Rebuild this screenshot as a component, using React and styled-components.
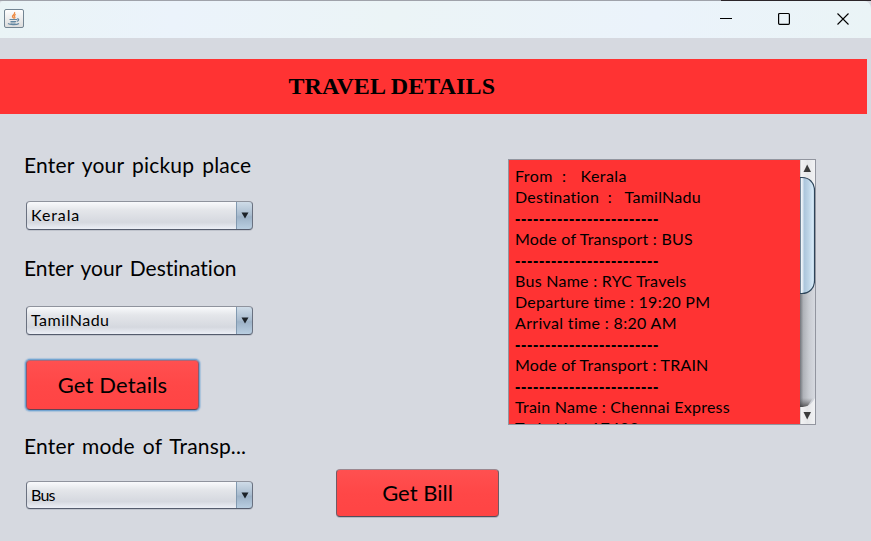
import React from "react";
import styled, { createGlobalStyle } from "styled-components";

const GlobalStyle = createGlobalStyle`
  * { box-sizing: border-box; }
  body { margin: 0; overflow: hidden; background: #d6d9e0; }
`;

const Window = styled.main`
  width: 871px;
  height: 541px;
  overflow: hidden;
  background: #d6d9e0;
  color: #000;
  font-family: Lato, "Liberation Sans", sans-serif;
  font-variant-ligatures: none;
  border-bottom-left-radius: 3px;
`;

const TopEdge = styled.div`
  height: 1px;
  background: linear-gradient(90deg, #9fa2aa 721px, #2b2529 721px);
`;

const TitleBar = styled.header`
  display: flex;
  align-items: flex-start;
  justify-content: space-between;
  height: 37px;
  padding: 8px 0 0 4px;
  background: linear-gradient(100deg, #eaf4f6, #ebf3fb 20%, #ebf4f6 45%, #ebf3fb 75%, #eaf4f6);
  border-radius: 3px 7px 0 0;
`;

const WindowControls = styled.div`
  display: flex;
  gap: 46px;
  margin: 3px 21px 0 0;
`;

const Content = styled.div`
  padding-top: 21px;
`;

const Banner = styled.h1`
  width: 867px;
  height: 55px;
  margin: 0;
  padding-left: 288.5px;
  background: #ff3333;
  font: bold 24px/55px "Liberation Serif", serif;
  letter-spacing: 0.1px;
`;

const Columns = styled.div`
  display: grid;
  grid-template-columns: 336px 172px 308px;
`;

const FormColumn = styled.section`
  display: flex;
  flex-direction: column;
  align-items: flex-start;
  padding: 36px 0 0 24px;
`;

const Label = styled.label`
  height: 30px;
  margin-top: ${(p) => p.$above || 0}px;
  font-size: 21px;
  line-height: 30px;
  letter-spacing: ${(p) => p.$track || 0}px;
  word-spacing: 2.5px;
  white-space: pre;
`;

const Combo = styled.div`
  display: flex;
  justify-content: space-between;
  width: 227px;
  height: ${(p) => p.$height || 29}px;
  margin: ${(p) => p.$above}px 0 0 2px;
  border: 1px solid;
  border-color: #8f939d #6a7180 #555c6d #6a7180;
  border-radius: 4px;
  background: linear-gradient(#f9fafc, #e4e6ea 30%, #d5d8df 75%, #eceff6);
  box-shadow: 0 1px 0 #bfc3cc;
  overflow: hidden;
`;

const ComboValue = styled.span`
  padding-left: 4px;
  font-size: 16px;
  line-height: 25px;
  letter-spacing: ${(p) => p.$track || 0}px;
`;

const ComboArrow = styled.span`
  display: flex;
  align-items: center;
  justify-content: center;
  width: 17px;
  margin: -1px -1px -1px 0;
  border: 1px solid;
  border-color: #5f7890 #2f475d #2f475d #8199b0;
  border-radius: 0 4px 4px 0;
  background: linear-gradient(#cfdce8, #a9bccf 48%, #9db2c7 55%, #b9cee1);
`;

const Button = styled.button`
  width: ${(p) => p.$width}px;
  height: ${(p) => p.$height}px;
  margin: ${(p) => p.$margin};
  padding: 0;
  border: 1px solid;
  border-color: ${(p) => (p.$focused ? "#a9687a #8a5c70 #644453" : "#9c878f #715a64 #514e5c")};
  border-radius: 4px;
  background: linear-gradient(#ff5050, #ff4747 50%, #ff4444);
  box-shadow: ${(p) => (p.$focused ? "0 0 0 1px #73a4d1, 0 0 1px 2px #a9c2db" : "0 1px 0 #b4b8c1")};
  color: #000;
  font: 22px/1 Lato, "Liberation Sans", sans-serif;
  letter-spacing: ${(p) => p.$track || 0}px;
`;

const OutputPanel = styled.section`
  display: flex;
  height: 266px;
  margin-top: 45px;
  border: 1px solid #92959f;
  overflow: hidden;
`;

const Output = styled.div`
  width: 291px;
  flex: none;
  padding: 5px 0 0 6px;
  background: #ff3333;
  overflow: hidden;
`;

const OutputLine = styled.div`
  height: 21px;
  font-size: 16px;
  line-height: 22px;
  white-space: pre;
  letter-spacing: ${(p) => p.$track}px;
  word-spacing: ${(p) => p.$gap || 0}px;
`;

const Dashes = styled.div`
  height: 21px;
  font: bold 16px/23px "Liberation Sans", sans-serif;
  letter-spacing: 0.67px;
  white-space: pre;
`;

const ScrollBar = styled.div`
  flex: 1;
  height: 264px;
`;

function JavaIcon() {
  return (
    <svg width="20" height="19" viewBox="0 0 20 19" fill="none">
      <defs>
        <linearGradient id="tile" x2="0" y2="1">
          <stop stopColor="#fff" />
          <stop offset="1" stopColor="#dcdcdc" />
        </linearGradient>
      </defs>
      <rect x=".5" y=".5" width="19" height="18" rx="1.5" fill="url(#tile)" stroke="#738593" />
      <path d="M10.500 3.200c1.500 2-2.800 2.700-2 4.500.3.800 1 1 1.200 1.800M11.800 5.500c-2 .8-2 1.600-1 2.500.4.600 0 1-.4 1.500" stroke="#ee8a42" strokeWidth="1.300" />
      <path d="M5.500 10.500h7.500M6.500 12.500h5.500M13 10c2.500-.5 2 1.800-.3 2.300M4 14.600c2 1.400 9 1.200 11-.2M6.500 14h5" stroke="#6387a1" strokeWidth="1.200" />
    </svg>
  );
}

const Triangle = () => (
  <svg width="8" height="7" viewBox="0 0 8 7">
    <path d="M.5 .5h7L4 6.500z" fill="#1c2228" />
  </svg>
);

function Select({ value, track, ...box }) {
  return (
    <Combo {...box}>
      <ComboValue $track={track}>{value}</ComboValue>
      <ComboArrow><Triangle /></ComboArrow>
    </Combo>
  );
}

function ScrollGraphic() {
  return (
    <svg width="15" height="264" viewBox="0 0 15 264" display="block">
      <defs>
        <linearGradient id="track">
          <stop stopColor="#71747a" />
          <stop offset=".22" stopColor="#afb2b8" />
          <stop offset=".6" stopColor="#c9ccd2" />
          <stop offset="1" stopColor="#d6d9e0" />
        </linearGradient>
        <linearGradient id="thumb">
          <stop stopColor="#cfdce8" />
          <stop offset=".12" stopColor="#f2f7fb" />
          <stop offset=".3" stopColor="#acc6dc" />
          <stop offset=".6" stopColor="#bed5e7" />
          <stop offset="1" stopColor="#def1ff" />
        </linearGradient>
        <linearGradient id="cap">
          <stop stopColor="#f5f5f6" />
          <stop offset=".5" stopColor="#e6e7e9" />
          <stop offset="1" stopColor="#f1f2f4" />
        </linearGradient>
        <linearGradient id="shade" x2="0" y2="1">
          <stop stopColor="#555" stopOpacity="0" />
          <stop offset="1" stopColor="#333" stopOpacity=".75" />
        </linearGradient>
      </defs>
      <path d="M0 0h15v264H0z" fill="url(#track)" />
      <path d="M0 238h13l-6 9H0z" fill="url(#shade)" />
      <path d="M0 0h15v28Q12 17 1 17H0z" fill="url(#cap)" />
      <path d="M0 247c8 0 11-2 15-9v26H0z" fill="url(#cap)" />
      <path d="M0 17.500h2c7 0 12.500 5 12.500 13v90c0 8-5.500 13-12.500 13H0z" fill="url(#thumb)" stroke="#2d4459" strokeWidth="1.200" />
      <path d="M0 0v17M0 247v17" stroke="#a5a7ab" />
      <path d="M3.500 12h7.500L7.200 4.500z" fill="#3b3b3b" />
      <path d="M3.500 252h7.500l-3.800 7.500z" fill="#3b3b3b" />
    </svg>
  );
}

const DIVIDER = "-".repeat(24);

const lines = [
  { text: "From  :   Kerala", track: 0.4, gap: 0.2 },
  { text: "Destination  :   TamilNadu", track: 0.25 },
  { text: DIVIDER },
  { text: "Mode of Transport : BUS", track: 0.22 },
  { text: DIVIDER },
  { text: "Bus Name : RYC Travels", track: 0.27 },
  { text: "Departure time : 19:20 PM", track: 0.25 },
  { text: "Arrival time : 8:20 AM", track: 0.33 },
  { text: DIVIDER },
  { text: "Mode of Transport : TRAIN", track: 0.2 },
  { text: DIVIDER },
  { text: "Train Name : Chennai Express", track: 0.26 },
  { text: "Train No : 17433", track: 0.4 },
];

export default function App() {
  return (
    <Window>
      <GlobalStyle />
      <TopEdge />
      <TitleBar>
        <JavaIcon />
        <WindowControls>
          <svg width="13" height="13" viewBox="0 0 13 13"><path d="M1 6.500h12" stroke="#000" /></svg>
          <svg width="13" height="13" viewBox="0 0 13 13"><rect x=".6" y="1.500" width="10.800" height="10.800" rx="1" fill="none" stroke="#000" strokeWidth="1.200" /></svg>
          <svg width="13" height="13" viewBox="0 0 13 13"><path d="M.5 1.500l11 11M11.500 1.500l-11 11" stroke="#000" strokeWidth="1.100" /></svg>
        </WindowControls>
      </TitleBar>
      <Content>
        <Banner>TRAVEL DETAILS</Banner>
        <Columns>
          <FormColumn>
            <Label $track={0.2}>Enter your pickup place</Label>
            <Select value="Kerala" track={0.9} $above={21} />
            <Label $above={23} $track={0}>Enter your Destination</Label>
            <Select value="TamilNadu" track={0.5} $above={23} />
            <Button $focused $width={173} $height={50} $track={0.15} $margin="25px 0 0 2px">Get Details</Button>
            <Label $above={21} $track={0.17}>Enter mode of Transp...</Label>
            <Select value="Bus" track={-0.8} $above={20} $height={28} />
          </FormColumn>
          <div>
            <Button $width={163} $height={48} $margin="355px 0 0 0">Get Bill</Button>
          </div>
          <OutputPanel>
            <Output>
              {lines.map((line, i) =>
                line.text === DIVIDER ? (
                  <Dashes key={i}>{line.text}</Dashes>
                ) : (
                  <OutputLine key={i} $track={line.track} $gap={line.gap}>{line.text}</OutputLine>
                )
              )}
            </Output>
            <ScrollBar><ScrollGraphic /></ScrollBar>
          </OutputPanel>
        </Columns>
      </Content>
    </Window>
  );
}
